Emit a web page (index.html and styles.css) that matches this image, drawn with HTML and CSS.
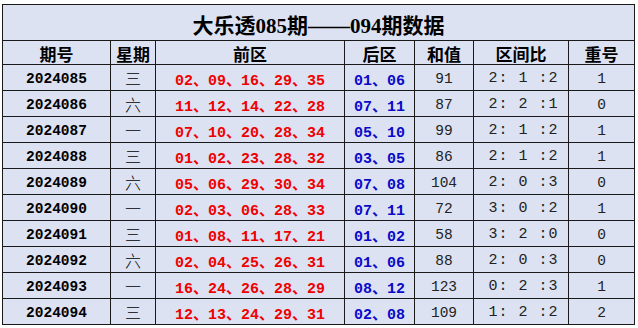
FILE: index.html
```html
<!DOCTYPE html>
<html lang="zh-CN">
<head>
<meta charset="utf-8">
<title>大乐透085期——094期数据</title>
<link rel="stylesheet" href="styles.css">
</head>
<body>
<div class="sheet">
  <div class="title">大乐透085期——094期数据</div>

  <div class="hd">期号</div><div class="hd">星期</div><div class="hd">前区</div><div class="hd">后区</div><div class="hd">和值</div><div class="hd">区间比</div><div class="hd">重号</div>

  <div class="no">2024085</div><div class="wk">三</div><div class="fr">02、09、16、29、35</div><div class="bk">01、06</div><div class="sum">91</div><div class="ratio">2: 1 :2</div><div class="rep">1</div>
  <div class="no">2024086</div><div class="wk">六</div><div class="fr">11、12、14、22、28</div><div class="bk">07、11</div><div class="sum">87</div><div class="ratio">2: 2 :1</div><div class="rep">0</div>
  <div class="no">2024087</div><div class="wk">一</div><div class="fr">07、10、20、28、34</div><div class="bk">05、10</div><div class="sum">99</div><div class="ratio">2: 1 :2</div><div class="rep">1</div>
  <div class="no">2024088</div><div class="wk">三</div><div class="fr">01、02、23、28、32</div><div class="bk">03、05</div><div class="sum">86</div><div class="ratio">2: 1 :2</div><div class="rep">1</div>
  <div class="no">2024089</div><div class="wk">六</div><div class="fr">05、06、29、30、34</div><div class="bk">07、08</div><div class="sum">104</div><div class="ratio">2: 0 :3</div><div class="rep">0</div>
  <div class="no">2024090</div><div class="wk">一</div><div class="fr">02、03、06、28、33</div><div class="bk">07、11</div><div class="sum">72</div><div class="ratio">3: 0 :2</div><div class="rep">1</div>
  <div class="no">2024091</div><div class="wk">三</div><div class="fr">01、08、11、17、21</div><div class="bk">01、02</div><div class="sum">58</div><div class="ratio">3: 2 :0</div><div class="rep">0</div>
  <div class="no">2024092</div><div class="wk">六</div><div class="fr">02、04、25、26、31</div><div class="bk">01、06</div><div class="sum">88</div><div class="ratio">2: 0 :3</div><div class="rep">0</div>
  <div class="no">2024093</div><div class="wk">一</div><div class="fr">16、24、26、28、29</div><div class="bk">08、12</div><div class="sum">123</div><div class="ratio">0: 2 :3</div><div class="rep">1</div>
  <div class="no">2024094</div><div class="wk">三</div><div class="fr">12、13、24、29、31</div><div class="bk">02、08</div><div class="sum">109</div><div class="ratio">1: 2 :2</div><div class="rep">2</div>
</div>
</body>
</html>
```

FILE: styles.css
```css
html, body {
  margin: 0;
  padding: 0;
  background: #ffffff;
}

body {
  padding: 4px 0 0 2px;
  width: 638px;
  height: 328px;
  box-sizing: border-box;
  overflow: hidden;
}

.sheet {
  display: grid;
  grid-template-columns: 107px 44px 188px 69px 58px 94px 65px;
  grid-template-rows: 35px 23px repeat(10, 25px);
  gap: 1px;
  padding: 1px;
  background: #1a1a1a;
  width: max-content;
}

.sheet > div {
  background: #dce2f2;
  display: flex;
  align-items: center;
  justify-content: center;
  white-space: pre;
  color: #000;
  box-sizing: border-box;
}

.title {
  grid-column: 1 / -1;
  font-family: "Liberation Serif", "Noto Sans CJK SC", serif;
  font-weight: bold;
  font-size: 21px;
  color: #111;
  padding-top: 2px;
}

.hd {
  font-family: "Noto Sans CJK SC", sans-serif;
  font-weight: bold;
  font-size: 17px;
  color: #111;
  padding-top: 1px;
}

.no {
  font-family: "Liberation Mono", "Noto Sans CJK SC", monospace;
  font-weight: bold;
  font-size: 14.5px;
  padding-top: 2px;
}

.wk {
  font-family: "Noto Sans CJK SC", sans-serif;
  font-weight: 300;
  font-size: 16px;
}

.fr {
  font-family: "Liberation Mono", "Noto Sans CJK SC", monospace;
  font-weight: bold;
  font-size: 15px;
  color: #f00000 !important;
  padding-top: 2px;
}

.bk {
  font-family: "Liberation Mono", "Noto Sans CJK SC", monospace;
  font-weight: bold;
  font-size: 15px;
  color: #0a0ac8 !important;
  padding-top: 2px;
}

.sum, .rep {
  font-family: "Liberation Mono", monospace;
  font-size: 14.5px;
  color: #222 !important;
  padding-top: 2px;
}

.ratio {
  font-family: "Liberation Mono", monospace;
  font-size: 15px;
  letter-spacing: 1px;
  color: #222 !important;
  padding-top: 2px;
  padding-left: 5px;
}
```
